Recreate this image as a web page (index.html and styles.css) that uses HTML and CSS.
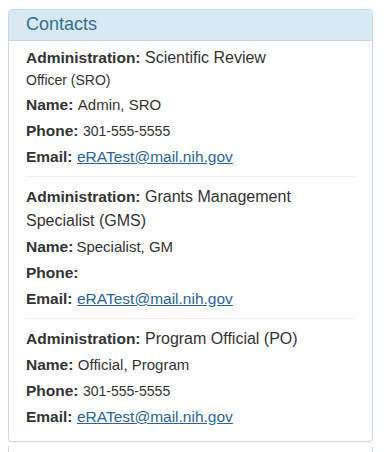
FILE: index.html
```html
<!DOCTYPE html>
<html lang="en">
<head>
    <meta charset="UTF-8">
    <meta name="viewport" content="width=device-width, initial-scale=1.0">
    <title>Contacts</title>
    <link rel="stylesheet" href="styles.css">
</head>
<body>
    <div class="panel">
        <div class="panel-heading">Contacts</div>
        <div class="panel-body">
            <div class="contact">
                <div class="field">
                    <span class="label">Administration:</span> <span class="val-lg">Scientific Review</span>
                    <span class="wrap-sm">Officer (SRO)</span>
                </div>
                <div class="field"><span class="label">Name:</span> <span class="val-md">Admin, SRO</span></div>
                <div class="field"><span class="label">Phone:</span> <span class="val-sm">301-555-5555</span></div>
                <div class="field"><span class="label">Email:</span> <a href="mailto:eRATest@mail.nih.gov">eRATest@mail.nih.gov</a></div>
            </div>

            <div class="contact">
                <div class="field">
                    <span class="label">Administration:</span> <span class="val-lg">Grants Management</span>
                    <span class="wrap-lg">Specialist (GMS)</span>
                </div>
                <div class="field"><span class="label">Name:</span><span class="val-md tight">Specialist, GM</span></div>
                <div class="field"><span class="label">Phone:</span></div>
                <div class="field"><span class="label">Email:</span> <a href="mailto:eRATest@mail.nih.gov">eRATest@mail.nih.gov</a></div>
            </div>

            <div class="contact">
                <div class="field"><span class="label">Administration:</span> <span class="val-lg">Program Official (PO)</span></div>
                <div class="field"><span class="label">Name:</span> <span class="val-md">Official, Program</span></div>
                <div class="field"><span class="label">Phone:</span> <span class="val-sm">301-555-5555</span></div>
                <div class="field"><span class="label">Email:</span> <a href="mailto:eRATest@mail.nih.gov">eRATest@mail.nih.gov</a></div>
            </div>
        </div>
    </div>

    <div class="panel panel-next"></div>
</body>
</html>
```

FILE: styles.css
```css
:root {
    --heading-bg: #d9e9f3;
    --heading-text: #31708f;
    --border: #c4dde9;
    --text: #333;
    --link: #2a6496;
}

* {
    box-sizing: border-box;
    margin: 0;
    padding: 0;
}

body {
    font-family: "Liberation Sans", Arial, sans-serif;
    color: var(--text);
    background: #fff;
    padding: 9px 11px 0 8px;
}

.panel {
    width: 365px;
    border: 1px solid var(--border);
    border-radius: 4px;
    background: #fff;
    box-shadow: 0 1px 1px rgba(0, 0, 0, 0.05);
}

.panel-heading {
    background: var(--heading-bg);
    color: var(--heading-text);
    border-bottom: 1px solid var(--border);
    border-radius: 3px 3px 0 0;
    font-size: 18px;
    line-height: 21px;
    padding: 4px 17px 5px;
}

.panel-body {
    padding: 5px 17px 5px;
}

.contact {
    padding: 8px 0 5px;
    border-bottom: 1px solid #eee;
}

.contact:first-child {
    padding-top: 0;
}

.contact:last-child {
    border-bottom: none;
}

.field {
    font-size: 16px;
    line-height: 24px;
    margin-bottom: 2px;
}

.label {
    font-weight: bold;
    font-size: 15.5px;
}

.val-lg {
    font-size: 16px;
}

.val-md {
    font-size: 15px;
}

.val-sm {
    font-size: 14px;
}

.tight {
    margin-left: 3px;
}

.wrap-sm {
    display: block;
    font-size: 14px;
    line-height: 21px;
}

.wrap-lg {
    display: block;
    font-size: 16px;
    line-height: 24px;
}

.field a {
    color: var(--link);
    font-size: 15.5px;
    text-decoration: underline;
}

.panel-next {
    margin-top: 4px;
    height: 20px;
    border-top-color: transparent;
    border-bottom: none;
    box-shadow: none;
    border-radius: 0;
}
```
